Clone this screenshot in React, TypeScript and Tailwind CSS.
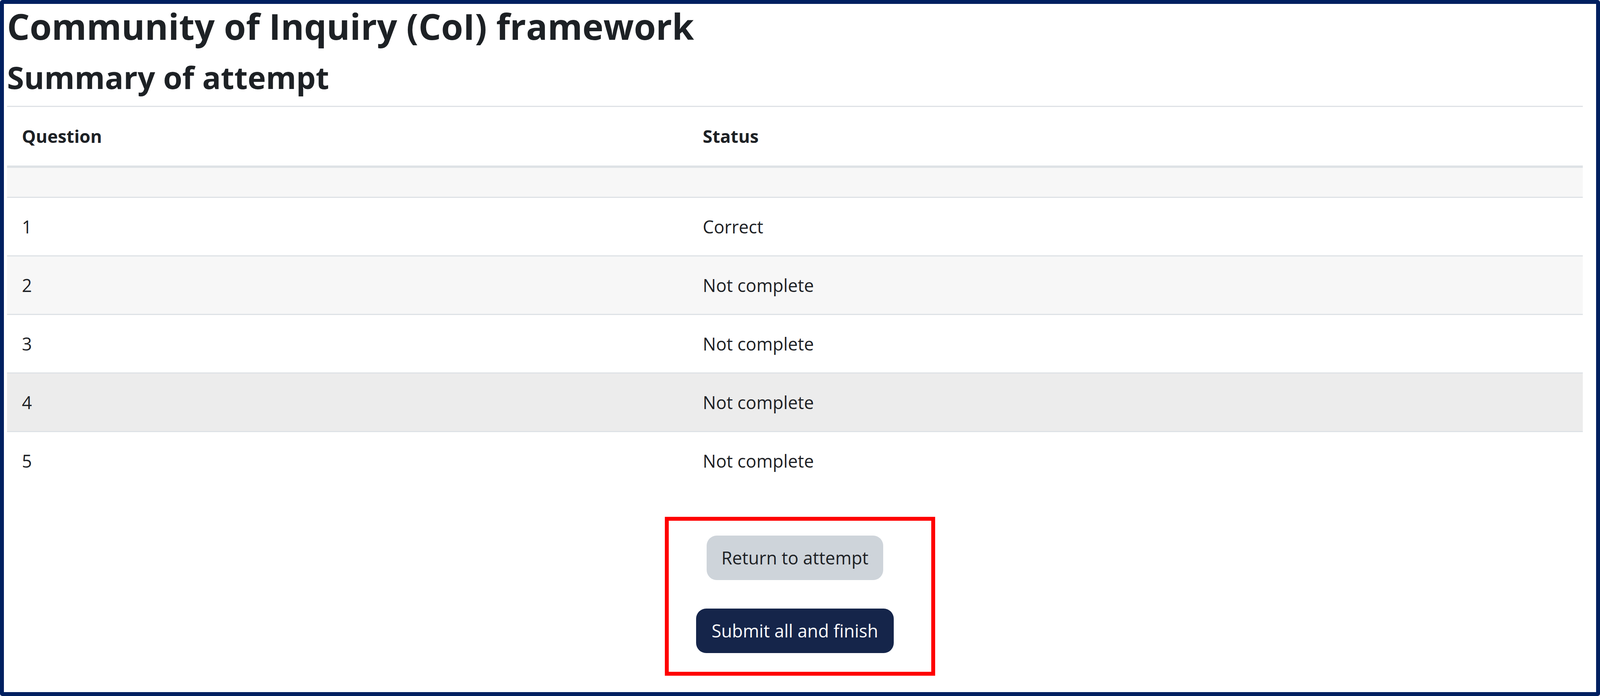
import React from "react";

const rows: { q: string; s: string; bg: string }[] = [
  { q: "1", s: "Correct", bg: "bg-white" },
  { q: "2", s: "Not complete", bg: "bg-[#f7f7f7]" },
  { q: "3", s: "Not complete", bg: "bg-white" },
  { q: "4", s: "Not complete", bg: "bg-[#ececec]" },
  { q: "5", s: "Not complete", bg: "bg-white" },
];

export default function App() {
  return (
    <div
      className="w-full h-screen box-border border-[10px] border-[#002060] rounded-[6px] bg-white text-[#1d2125] overflow-hidden"
      style={{ fontFamily: '"Open Sans", "Noto Sans", sans-serif' }}
    >
      <div className="pl-[8px] pr-[34px] pt-[12px] flex flex-col">
        <h1 className="m-0 text-[91px] leading-[91px] font-bold">
          Community of Inquiry (CoI) framework
        </h1>
        <h2 className="m-0 mt-[45px] text-[79px] leading-[79px] font-bold">
          Summary of attempt
        </h2>
        <div className="mt-[34px] h-[3px] bg-[#dee2e6]" />

        <div className="flex flex-col">
          <div className="grid grid-cols-[43.26%_1fr] items-center h-[156px] box-border border-b-[6px] border-[#dee2e6]">
            <div className="pl-[38px] text-[45px] font-bold">Question</div>
            <div className="pl-[36px] text-[45px] font-bold">Status</div>
          </div>
          <div className="h-[74px] bg-[#f7f7f7]" />
          {rows.map((r) => (
            <div
              key={r.q}
              className={`grid grid-cols-[43.26%_1fr] items-center h-[150px] box-border border-t-[3px] border-[#dee2e6] ${r.bg}`}
            >
              <div className="pl-[38px] text-[45px]">{r.q}</div>
              <div className="pl-[36px] text-[45px]">{r.s}</div>
            </div>
          ))}
        </div>

        <div className="flex justify-center pt-[70px]">
          <div className="ml-[26px] w-[692px] h-[407px] box-border border-[10px] border-[#ff0000] flex flex-col items-center pt-[38px] pr-[26px] gap-[73px]">
            <button className="w-[452px] h-[114px] rounded-[26px] bg-[#ced4da] text-[#1d2125] text-[45px] flex items-center justify-center">
              Return to attempt
            </button>
            <button className="w-[506px] h-[114px] rounded-[26px] bg-[#15254a] text-white text-[45px] flex items-center justify-center">
              Submit all and finish
            </button>
          </div>
        </div>
      </div>
    </div>
  );
}
